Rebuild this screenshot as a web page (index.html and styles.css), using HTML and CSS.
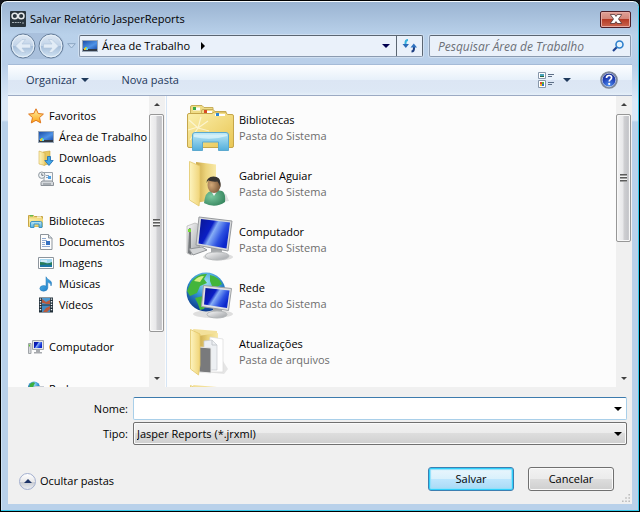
FILE: index.html
```html
<!DOCTYPE html>
<html lang="pt-BR">
<head>
<meta charset="utf-8">
<title>Salvar Relatório JasperReports</title>
<link rel="stylesheet" href="styles.css">
</head>
<body>
<svg class="defs" aria-hidden="true">
  <defs>
    <linearGradient id="g-screen" x1="0" y1="0" x2="1" y2=".5"><stop offset="0" stop-color="#0a1690"/><stop offset=".42" stop-color="#0a1ec4"/><stop offset=".55" stop-color="#86aef6"/><stop offset=".8" stop-color="#2c50e0"/><stop offset="1" stop-color="#0c28cc"/></linearGradient>
    <linearGradient id="g-desk" x1="0" y1="0" x2="1" y2="1"><stop offset="0" stop-color="#1c4fa8"/><stop offset=".6" stop-color="#4f93e6"/><stop offset="1" stop-color="#1f55b4"/></linearGradient>
    <linearGradient id="g-folder" x1="0" y1="0" x2="1" y2="1"><stop offset="0" stop-color="#fbf0ae"/><stop offset="1" stop-color="#e9c653"/></linearGradient>
    <linearGradient id="g-flap" x1="0" y1="0" x2="1" y2="0"><stop offset="0" stop-color="#fdf4bf"/><stop offset="1" stop-color="#f0d478"/></linearGradient>
    <linearGradient id="g-back" x1="0" y1="0" x2="1" y2="0"><stop offset="0" stop-color="#c9a648"/><stop offset=".5" stop-color="#ecd47c"/><stop offset="1" stop-color="#f8e9a8"/></linearGradient>
    <linearGradient id="g-tray" x1="0" y1="0" x2="0" y2="1"><stop offset="0" stop-color="#bfe9f6"/><stop offset="1" stop-color="#52aedc"/></linearGradient>
    <linearGradient id="g-metal" x1="0" y1="0" x2="1" y2="1"><stop offset="0" stop-color="#fafafa"/><stop offset="1" stop-color="#9c9fa3"/></linearGradient>
    <radialGradient id="g-globe" cx=".5" cy=".25" r=".75"><stop offset="0" stop-color="#9be0f5"/><stop offset=".5" stop-color="#2f8fd0"/><stop offset="1" stop-color="#0c3a8c"/></radialGradient>
    <linearGradient id="g-ball" x1="0" y1="0" x2="0" y2="1"><stop offset="0" stop-color="#dfe9f4"/><stop offset=".5" stop-color="#c1d3e8"/><stop offset=".52" stop-color="#a7bfda"/><stop offset="1" stop-color="#d3e5f5"/></linearGradient>
    <radialGradient id="g-help" cx=".5" cy=".85" r=".8"><stop offset="0" stop-color="#4f8ff0"/><stop offset=".6" stop-color="#1f3fb5"/><stop offset="1" stop-color="#15288c"/></radialGradient>
    <linearGradient id="g-note" x1="0" y1="0" x2="1" y2="1"><stop offset="0" stop-color="#5cc0ee"/><stop offset="1" stop-color="#1573c4"/></linearGradient>
    <linearGradient id="g-star" x1="0" y1="0" x2="0" y2="1"><stop offset="0" stop-color="#fff3a8"/><stop offset="1" stop-color="#fba414"/></linearGradient>
    <radialGradient id="g-face" cx=".3" cy=".5" r=".8"><stop offset="0" stop-color="#d2a878"/><stop offset="1" stop-color="#6d4a2e"/></radialGradient>
    <radialGradient id="g-shirt" cx=".35" cy=".4" r=".8"><stop offset="0" stop-color="#7cc9a0"/><stop offset="1" stop-color="#2c7c55"/></radialGradient>
  </defs>
  <symbol id="i-desktop" viewBox="0 0 16 16">
    <rect x=".5" y="2.500" width="15" height="11" fill="#4e5d70" stroke="#9aa8b8"/>
    <rect x="1" y="3" width="14" height="8" fill="url(#g-desk)"/>
    <path d="M1 11h14v2H1z" fill="#323a46"/>
    <path d="M2 10h2v2H2z" fill="#f2c52c"/><path d="M4 10h2v2H4z" fill="#5fd3f0"/><path d="M3 9h2v1H3z" fill="#9adf54"/>
  </symbol>
  <symbol id="i-star" viewBox="0 0 16 16">
    <path d="M8 .8l2.200 4.700 5.200.6-3.900 3.500 1.200 5.300L8 12.300l-4.700 2.600 1.200-5.300L.6 6.100l5.200-.6z" fill="url(#g-star)" stroke="#e0761b"/>
  </symbol>
  <symbol id="i-downloads" viewBox="0 0 16 16">
    <path d="M5 2l7-1v13l-7 1z" fill="#e7c860" stroke="#c9a53c" stroke-width=".6"/>
    <path d="M1 1l6 2v12.500L1 14z" fill="url(#g-flap)" stroke="#d3b04b" stroke-width=".6"/>
    <path d="M9.500 6.500h3v4h2.700L11 15.500 6.800 10.500h2.700z" fill="#42a6e8" stroke="#1a6cb5" stroke-width=".8"/>
  </symbol>
  <symbol id="i-places" viewBox="0 0 16 16">
    <path d="M6 1.500h8.500v9H6z" fill="#f5f7f9" stroke="#9aa2aa"/>
    <path d="M8 4h3v1H8zM8 6h2v1H8z" fill="#8fa3b8"/><path d="M10 5h3v3h-3z" fill="#4c9fe4"/>
    <path d="M3 11.500l1-1.500h10l1.500 1.500v3H3z" fill="#d4d8dc" stroke="#8b9198"/>
    <path d="M5 13h8" stroke="#7b8188"/>
    <circle cx="3.800" cy="4.200" r="3.200" fill="#eef2f5" stroke="#8f989f"/><path d="M3.800 2.300v2h1.700" fill="none" stroke="#5a636c" stroke-width=".9"/>
  </symbol>
  <symbol id="i-libs-sm" viewBox="0 0 16 16">
    <path d="M.5 2.500h5l1 1h8v10H.5z" fill="#eed678" stroke="#c6a546"/>
    <path d="M1 5.500h14v8H1z" fill="url(#g-folder)"/><path d="M2 2h3v1.500H2z" fill="#63b94f"/><path d="M9 4h4" stroke="#fff"/>
    <path d="M2.500 14.500V10q0-1.500 1.500-1.500h8.500q1.500 0 1.500 1.500v4.500h-3V11h-5v3.500z" fill="url(#g-tray)" stroke="#3d93c4"/>
  </symbol>
  <symbol id="i-doc" viewBox="0 0 16 16">
    <path d="M2.500.5h8l3.500 3.500v11.500H2.500z" fill="#fdfdfd" stroke="#8e959c"/><path d="M10.500.5V4H14" fill="#dce3ea" stroke="#8e959c"/>
    <path d="M4 4.500h4M4 6.500h5M4 8.500h3M4 10.500h3M4 12.500h8" stroke="#8faad2"/><path d="M8 7h4v4H8z" fill="#3672c2"/>
  </symbol>
  <symbol id="i-image" viewBox="0 0 16 16">
    <path d="M.5 2.500h15v11H.5z" fill="#fff" stroke="#8d959d"/><path d="M2 4h12v8H2z" fill="#a6d8f2"/>
    <path d="M2 7q4 0 6 1t6-1v5H2z" fill="#287c5b"/><path d="M2 10q7-1 12 0v2H2z" fill="#1c75a6"/><path d="M3 6h6" stroke="#fff"/>
  </symbol>
  <symbol id="i-music" viewBox="0 0 16 16">
    <path d="M8 .8q1.200 2.500 3.500 3.400 3.200 1.700 1.500 5.800.2-3-3.200-3.700V12q-.3 3-4.200 3.200-3.700-.2-3.800-2.700.2-2.800 3.800-3 1.500 0 2.400.6z" fill="url(#g-note)" stroke="#2577b4" stroke-width=".5"/>
  </symbol>
  <symbol id="i-video" viewBox="0 0 16 16">
    <path d="M1 .5h14v15H1z" fill="#22303a"/><path d="M4 1h8v6.500H4z" fill="#4d9ad2"/><path d="M4 8.500h8V15H4z" fill="#3f8bc6"/>
    <path d="M4 2l4 3 4-2v4H9L4 6zM5 15l3-4 4-2v3l-3 3z" fill="#b75a3e"/>
    <path d="M2.500 1.500v13M13.500 1.500v13" stroke="#eef3f5" stroke-width="1.400" stroke-dasharray="1.300 1.300"/>
  </symbol>
  <symbol id="i-computer-sm" viewBox="0 0 16 16">
    <path d="M.5 4.500h2.500v10H.5z" fill="#d7dadd" stroke="#a0a4a8"/><path d="M1 5.500h1v2H1z" fill="#66c33b"/>
    <path d="M4.500 1.500h11v9h-11z" fill="#e4e6e8" stroke="#a4a8ac"/><path d="M6 3h8v6H6z" fill="url(#g-screen)"/>
    <path d="M8 11h4v2h2v1.500H6V13h2z" fill="#a7aaae"/>
  </symbol>
  <symbol id="i-network-sm" viewBox="0 0 16 16">
    <circle cx="6" cy="6.500" r="6" fill="url(#g-globe)"/><path d="M2 3q3-3 5-1l-2 4-4 1zM7 8l3-3 2 4-3 3z" fill="#3daf3e"/>
    <path d="M6.500 5.500h9v6h-9z" fill="#1c4fe0" stroke="#c9cdd2"/><path d="M9 12h4v2H9z" fill="#a7aaae"/>
  </symbol>
  <symbol id="i-libs" viewBox="0 0 48 48">
    <path d="M4.500 14V3q0-1.500 1.500-1.500h10l2 2h9v12z" fill="#efdc86" stroke="#c8ae5b"/>
    <path d="M7 3.500h7v3H7z" fill="#fff"/><path d="M7 3h3v3H7z" fill="#39a947"/>
    <path d="M15.500 16V7q0-1.500 1.500-1.500h10l2 2h11v10z" fill="#f1dd87" stroke="#c8ae5b"/>
    <path d="M18 7h8v2.500h-8z" fill="#fff"/><path d="M18 6h3v3h-3z" fill="#d84b24"/>
    <path d="M1.500 11q0-1.500 1.500-1.500h23l2-1.500h11.500l2 2.500H46q1.500 0 1.500 1.500v30q0 1.500-1.500 1.500H3q-1.500 0-1.500-1.500z" fill="url(#g-folder)" stroke="#c5a64b"/>
    <path d="M29 10h10v2H29z" fill="#fff"/><path d="M30 9h3v3h-3z" fill="#2d87d3"/>
    <path d="M2 26l10-3M12 24l3-11M12 24l10-7M12 24l11 3M12 24l-8 12M12 24l-9-8" stroke="#fffce8" stroke-width="1.200" opacity=".7"/>
    <path d="M6.500 46.500V31q0-2.500 2.500-2.500h31q2.500 0 2.500 2.500v15.500h-10V38h-16v8.500z" fill="url(#g-tray)" stroke="#5ba9cf"/>
    <path d="M8 33q17 4 33-1v-1.500H8z" fill="#e3f7fc" opacity=".7"/>
  </symbol>
  <symbol id="i-user" viewBox="0 0 48 48">
    <path d="M18 44l25-3-3-7-15 5z" fill="#dedede"/>
    <path d="M10 2l20 2.500v35l-18 3z" fill="url(#g-back)"/>
    <path d="M3.500 1.500L14 6v31l-1 9-9.500-6z" fill="url(#g-flap)" stroke="#e2c668" stroke-width=".8"/>
    <path d="M18 43q1-11 7-12l6-1 5 1q4 2 3 11-10 7-21 1z" fill="url(#g-shirt)"/>
    <path d="M25 31l3 5 4-6z" fill="#f3f5f4"/>
    <ellipse cx="28" cy="25" rx="6.500" ry="8" fill="url(#g-face)"/>
    <path d="M20.500 23q0-6 7-6.500 7 0 7 7v4q-1.500-4-3-6-5 .5-9.500-1z" fill="#373431"/>
  </symbol>
  <symbol id="i-computer" viewBox="0 0 48 48">
    <ellipse cx="32" cy="41" rx="15" ry="3.500" fill="#dedede"/>
    <path d="M1 10l8-3 5 2v27l-9 3-4-2z" fill="url(#g-metal)" stroke="#aaa" stroke-width=".6"/><path d="M3 12l2 .5v26L2 37z" fill="#75797c"/><path d="M2 13h3v3H2z" fill="#77dc38"/>
    <path d="M3 33l13-2 5 3-14 5z" fill="#d3d5d7" stroke="#929598"/>
    <path d="M25 32h11v8H25z" fill="#a4a7aa"/><ellipse cx="31" cy="40" rx="12" ry="4" fill="url(#g-metal)" stroke="#b6b9bb"/>
    <path d="M13 1l33 4-4 30-32-6z" fill="#d7d9db" stroke="#979a9e"/><path d="M15 3l29 3.500-3.500 26L12.500 27.500z" fill="url(#g-screen)"/>
  </symbol>
  <symbol id="i-network" viewBox="0 0 48 48">
    <ellipse cx="27" cy="42" rx="20" ry="4" fill="#dedede"/>
    <circle cx="20" cy="20" r="19.500" fill="url(#g-globe)"/>
    <path d="M5 10q7-9 16-8l-3 5 3 4-7 3-3 7-7 3-3-5zM24 3q9 2 12 9l-5 3-5-1-2-5zM9 26l8-2 5 5-4 8-4 1-2-6z" fill="#43b53b"/>
    <path d="M8 9q4-5 10-5l-4 6z" fill="#d6ee84"/>
    <path d="M27 36h9v6h-9z" fill="#a5a8aa"/><ellipse cx="31" cy="42.500" rx="10" ry="3.500" fill="url(#g-metal)" stroke="#b4b7b9"/>
    <path d="M17.500 13.500l28 3-3 22-27-4z" fill="#dfe1e3" stroke="#9da0a3"/><path d="M19.500 16l24 2.500-2.500 17.500-23-3.500z" fill="url(#g-screen)"/>
  </symbol>
  <symbol id="i-folder" viewBox="0 0 48 48">
    <path d="M18 44l20 2 4-5-5-8z" fill="#e5e5e5"/>
    <path d="M7 1l24 2v12l-18 3z" fill="#f3e09a"/>
    <path d="M12 8l20-3v30l-20 4z" fill="url(#g-back)"/>
    <path d="M24 9l13 2v33H22z" fill="#fff" stroke="#dadada" stroke-width=".7"/><path d="M18 13l8-1 5 5v25H18z" fill="#edf0f3" stroke="#c5c9ce" stroke-width=".7"/><path d="M26 12v5h5" fill="none" stroke="#c5c9ce"/>
    <path d="M13 19l12 1v25l-12-1z" fill="#797a7c" stroke="#e9e9e9"/>
    <path d="M4.500 1.500L14 6v31l-1.500 10-8-6z" fill="url(#g-flap)" stroke="#e2c668" stroke-width=".8"/>
  </symbol>
  <symbol id="i-down" viewBox="0 0 8 4"><path d="M0 0h8L4 4z" fill="currentColor"/></symbol>
  <symbol id="i-up" viewBox="0 0 8 4"><path d="M4 0l4 4H0z" fill="currentColor"/></symbol>
  <symbol id="i-close" viewBox="0 0 12 10"><path d="M1 1h3.500L6 3l1.500-2H11L8 5l3 4H7.500L6 7 4.500 9H1l3-4z" fill="#fff" stroke="#594447" stroke-width="1.400" paint-order="stroke"/></symbol>
</svg>

<div class="window">
  <header class="title-bar">
    <svg class="app-icon" viewBox="0 0 16 16" aria-hidden="true">
      <rect width="16" height="16" rx="1" fill="#29343c"/>
      <g fill="none" stroke="#e6e9eb" stroke-width="1.500"><circle cx="4.800" cy="5" r="2.800"/><circle cx="11.200" cy="5" r="2.800"/></g>
      <path d="M2 11.500h9" stroke="#a7b0b6" stroke-dasharray="2 .7"/><path d="M13 11v2" stroke="#a7b0b6"/>
    </svg>
    <h1>Salvar Relatório JasperReports</h1>
    <button class="close" aria-label="Fechar"><svg><use href="#i-close"/></svg></button>
  </header>

  <nav class="nav-bar">
    <div class="travel">
      <button aria-label="Voltar"><svg viewBox="0 0 26 26"><circle cx="13" cy="13" r="12" fill="url(#g-ball)" stroke="#677f9b"/><circle cx="13" cy="13" r="10.800" fill="none" stroke="#e8f1f9"/><path d="M5.500 13l6.500-6.500h3.500L12 11h8.500v4H12l3.500 4.500H12z" fill="#e2ecf6" stroke="#b0c4da" stroke-width=".6"/></svg></button>
      <button aria-label="Avançar"><svg viewBox="0 0 26 26"><circle cx="13" cy="13" r="12" fill="url(#g-ball)" stroke="#677f9b"/><circle cx="13" cy="13" r="10.800" fill="none" stroke="#e8f1f9"/><path d="M20.500 13L14 6.500h-3.500L14 11H5.500v4H14l-3.500 4.500H14z" fill="#e2ecf6" stroke="#b0c4da" stroke-width=".6"/></svg></button>
    </div>
    <button class="recent" aria-label="Páginas recentes"><svg viewBox="0 0 9 6"><path d="M.7.700h7.600L4.500 5z" fill="#c9dcf0" stroke="#8ba5c2"/></svg></button>
    <div class="address">
      <svg class="icon" aria-hidden="true"><use href="#i-desktop"/></svg>
      <button class="crumb">Área de Trabalho</button>
      <button class="crumb-arrow" aria-label="Expandir"><svg viewBox="0 0 4 8"><path d="M0 0l4 4-4 4z"/></svg></button>
      <button class="history" aria-label="Locais anteriores"><svg class="arrow"><use href="#i-down"/></svg></button>
      <button class="refresh" aria-label="Atualizar"><svg viewBox="0 0 16 14"><path d="M6 1Q3.500 1 3.500 4v1" fill="none" stroke="#35b3df" stroke-width="2"/><path d="M.5 5h6.500L3.800 9z" fill="#2c6cb8"/><path d="M9.500 12.500q2.500 0 2.500-3.500V8" fill="none" stroke="#1c3d80" stroke-width="2"/><path d="M8.500 8.500h6.500L11.800 4.500z" fill="#2f72c0"/></svg></button>
    </div>
    <div class="search">
      <input type="search" placeholder="Pesquisar Área de Trabalho" aria-label="Pesquisar">
      <svg viewBox="0 0 12 12" aria-hidden="true"><path d="M1 11l4-4" stroke="#1f4391" stroke-width="2.200"/><circle cx="7.500" cy="4.500" r="3.500" fill="#e6f3fc" stroke="#2f80cc" stroke-width="1.600"/></svg>
    </div>
  </nav>

  <div class="toolbar">
    <button>Organizar <svg class="arrow"><use href="#i-down"/></svg></button>
    <button>Nova pasta</button>
    <button class="view" aria-label="Alterar modo de exibição">
      <svg class="icon" viewBox="0 0 16 16"><path d="M.5.500h7v6h-7zM.5 8.500h7v7h-7z" fill="#fff" stroke="#8797aa"/><path d="M2 2h4v3H2z" fill="#49a3bd"/><path d="M2 4h4v1H2z" fill="#24673f"/><path d="M2 10h2v2H2z" fill="#dd4731"/><path d="M4 10h2v2H4z" fill="#54ad3c"/><path d="M2 12h2v2H2z" fill="#eeb72c"/><path d="M4 12h2v2H4z" fill="#326fcc"/><path d="M10 2.500h6M10 4.500h4M10 10.500h6M10 12.500h4" stroke="#5d6f87"/></svg>
      <svg class="arrow"><use href="#i-down"/></svg>
    </button>
    <button class="help" aria-label="Ajuda"><svg viewBox="0 0 18 18"><circle cx="9" cy="9" r="8" fill="url(#g-help)" stroke="#7e8795" stroke-width="1.600"/><circle cx="9" cy="9" r="6.800" fill="none" stroke="#c9d3e6" stroke-width=".8"/><path d="M6.500 7q0-2.500 2.600-2.500 2.500 0 2.500 2.100 0 1.200-1.200 2-1.200.8-1.200 2" fill="none" stroke="#fff" stroke-width="1.700"/><circle cx="9.200" cy="12.900" r="1.100" fill="#fff"/></svg></button>
  </div>

  <main class="panes">
    <nav class="sidebar">
      <ul>
        <li><a href="#"><svg class="icon"><use href="#i-star"/></svg>Favoritos</a>
          <ul>
            <li><a href="#"><svg class="icon"><use href="#i-desktop"/></svg>Área de Trabalho</a></li>
            <li><a href="#"><svg class="icon"><use href="#i-downloads"/></svg>Downloads</a></li>
            <li><a href="#"><svg class="icon"><use href="#i-places"/></svg>Locais</a></li>
          </ul>
        </li>
        <li><a href="#"><svg class="icon"><use href="#i-libs-sm"/></svg>Bibliotecas</a>
          <ul>
            <li><a href="#"><svg class="icon"><use href="#i-doc"/></svg>Documentos</a></li>
            <li><a href="#"><svg class="icon"><use href="#i-image"/></svg>Imagens</a></li>
            <li><a href="#"><svg class="icon"><use href="#i-music"/></svg>Músicas</a></li>
            <li><a href="#"><svg class="icon"><use href="#i-video"/></svg>Vídeos</a></li>
          </ul>
        </li>
        <li><a href="#"><svg class="icon"><use href="#i-computer-sm"/></svg>Computador</a></li>
        <li><a href="#"><svg class="icon"><use href="#i-network-sm"/></svg>Rede</a></li>
      </ul>
    </nav>
    <div class="scrollbar">
      <button aria-label="Rolar para cima"><svg class="arrow"><use href="#i-up"/></svg></button>
      <div class="track"><div class="thumb" style="height:85%"><span class="ridges"></span></div></div>
      <button aria-label="Rolar para baixo"><svg class="arrow"><use href="#i-down"/></svg></button>
    </div>
    <ul class="files">
      <li><svg><use href="#i-libs"/></svg><p>Bibliotecas<span>Pasta do Sistema</span></p></li>
      <li><svg><use href="#i-user"/></svg><p>Gabriel Aguiar<span>Pasta do Sistema</span></p></li>
      <li><svg><use href="#i-computer"/></svg><p>Computador<span>Pasta do Sistema</span></p></li>
      <li><svg><use href="#i-network"/></svg><p>Rede<span>Pasta do Sistema</span></p></li>
      <li><svg><use href="#i-folder"/></svg><p>Atualizações<span>Pasta de arquivos</span></p></li>
      <li><svg><use href="#i-folder"/></svg></li>
    </ul>
    <div class="scrollbar">
      <button aria-label="Rolar para cima"><svg class="arrow"><use href="#i-up"/></svg></button>
      <div class="track"><div class="thumb" style="height:50%"><span class="ridges"></span></div></div>
      <button aria-label="Rolar para baixo"><svg class="arrow"><use href="#i-down"/></svg></button>
    </div>
  </main>

  <form class="bottom">
    <div class="fields">
      <label for="name">Nome:</label>
      <div class="combo name"><input id="name" type="text"><svg class="arrow"><use href="#i-down"/></svg></div>
      <label for="type">Tipo:</label>
      <div class="combo type"><select id="type"><option>Jasper Reports (*.jrxml)</option></select><svg class="arrow"><use href="#i-down"/></svg></div>
    </div>
    <div class="actions">
      <button type="button" class="hide"><span class="round"><svg class="arrow"><use href="#i-up"/></svg></span>Ocultar pastas</button>
      <button type="submit" class="btn primary">Salvar</button>
      <button type="button" class="btn">Cancelar</button>
    </div>
    <svg class="grip" viewBox="0 0 10 10" aria-hidden="true"><path d="M8 0h2v2H8zM4 4h2v2H4zM8 4h2v2H8zM0 8h2v2H0zM4 8h2v2H4zM8 8h2v2H8z" fill="#bcbcbc"/></svg>
  </form>
</div>
</body>
</html>
```
FILE: styles.css
```css
* { box-sizing: border-box; }

body {
  margin: 0;
  background: #14161c;
  color: #000;
  font: 11px/16px "Open Sans", "Noto Sans", sans-serif;
}

button, input, select {
  margin: 0;
  padding: 0;
  border: 0;
  background: none;
  color: inherit;
  font: inherit;
}

ul, p, h1 { margin: 0; padding: 0; list-style: none; }
a { color: inherit; text-decoration: none; }
svg { display: block; flex: none; }
.defs { position: absolute; width: 0; height: 0; }
.icon { width: 16px; height: 16px; }
.arrow { width: 8px; height: 4px; }

.window {
  display: flex;
  flex-direction: column;
  height: 100vh;
  padding: 0 7px 7px;
  border: 1px solid #000;
  border-radius: 7px 7px 0 0;
  box-shadow: inset 0 1px #f4f9fd, inset -1px 0 #35c9ea, inset 0 -1px #35c9ea, inset 1px 0 #cfe4f5;
  background: linear-gradient(#9ab3d1, #b9d1ea 34px, #b9cfe9 64px, #dce9f8 100px, #dce9f8 119px, #b9d1ea 121px);
}

/* Title bar */
.title-bar { display: flex; align-items: center; gap: 4px; height: 34px; padding: 2px 1px 0 2px; }
.app-icon { width: 16px; height: 16px; }
h1 { flex: 1; font-size: 11px; font-weight: 400; }
.close {
  display: grid;
  place-items: center;
  width: 31px;
  height: 17px;
  border: 1px solid #4e1f29;
  border-radius: 2px;
  box-shadow: inset 0 0 0 1px #e6aaa2;
  background: linear-gradient(#dfa096, #d38477 50%, #b53b26 50%, #ca6650);
}
.close svg { width: 12px; height: 10px; }

/* Navigation */
.nav-bar { display: flex; align-items: center; height: 22px; padding-right: 1px; }
.travel { display: flex; gap: 2px; margin-left: 2px; border-radius: 13px; background: #a9c0dc; }
.travel svg { width: 26px; height: 26px; }
.recent { margin: 0 3px; }
.recent svg { width: 9px; height: 6px; }
.address, .search {
  display: flex;
  align-items: center;
  height: 22px;
  border: 1px solid #8b9bb0;
  border-top-color: #5b6672;
  border-radius: 2px;
  box-shadow: 0 0 0 1px #cfdff1;
  background: #eaf1fa;
}
.address { flex: 344 1 344px; margin-right: 6px; padding-left: 2px; border-right-color: #5b6672; }
.address .icon { margin-right: 4px; }
.crumb, h1, .files, .sidebar a { white-space: nowrap; }
.crumb-arrow { margin-left: 11px; }
.crumb-arrow svg { width: 4px; height: 8px; }
.history { margin-left: auto; padding: 8px 6px; color: #00004f; }
.refresh { display: grid; place-items: center; align-self: stretch; width: 26px; border-left: 1px solid #5b6672; }
.refresh svg { width: 16px; height: 14px; }
.search { flex: 202 1 202px; min-width: 0; padding: 0 6px 0 8px; }
.search input { flex: 1; min-width: 0; height: 20px; outline: 0; font-size: 12px; font-style: italic; }
.search input::placeholder { color: #6c7078; opacity: 1; }
.search svg { width: 12px; height: 12px; }

/* Toolbar */
.toolbar {
  display: flex;
  align-items: center;
  height: 32px;
  margin-top: 7px;
  padding: 0 14px 0 18px;
  border-top: 1px solid #a5bbd7;
  border-bottom: 1px solid #9caac3;
  background: linear-gradient(#fdfeff, #e6f0fa 50%, #dce6f4 50%, #dde8f5 90%, #e6f0f9);
  color: #1e395b;
}
.toolbar button { display: flex; align-items: center; gap: 5px; margin-right: 32px; }
.toolbar .view { gap: 9px; margin-left: auto; margin-right: 29px; }
.toolbar .help { margin: 0; }
.help svg { width: 18px; height: 18px; }

/* Panes */
.panes { display: flex; flex: 1; min-height: 0; background: #fcfcfc; }
.sidebar { flex: none; width: 141px; padding: 9px 0 0 20px; overflow: hidden; }
.sidebar li li { padding-left: 10px; }
.sidebar > ul > li { margin-bottom: 21px; }
.sidebar a { display: flex; align-items: center; gap: 5px; height: 21px; }
.files { flex: 1; min-width: 0; margin-left: 1px; padding: 4px 0 0 19px; overflow: hidden; border-left: 1px solid #d6e5f5; }
.files li { display: flex; align-items: center; gap: 5px; height: 56px; }
.files svg { width: 48px; height: 48px; }
.files span { display: block; color: #6d6d6d; }

.scrollbar { display: flex; flex: none; flex-direction: column; width: 16px; padding-right: 1px; background: #f0f0f0; color: #404040; }
.scrollbar button { display: grid; place-items: center; height: 17px; }
.scrollbar .arrow { width: 6px; height: 3px; }
.track { flex: 1; padding-top: 1px; }
.thumb {
  display: grid;
  place-items: center;
  border: 1px solid #979797;
  border-radius: 2px;
  box-shadow: inset 0 0 0 1px #f8f8f8;
  background: linear-gradient(90deg, #f4f4f4, #e8e8ea 45%, #cfcfd2 55%, #c4c5c9 85%, #dcdcde);
}
.ridges { width: 7px; height: 8px; background: repeating-linear-gradient(#5c5c5c 0 1px, #a0a0a0 1px 2px, #f4f4f4 2px 3px); }

/* Form */
.bottom { position: relative; padding: 10px 5px 13px 0; background: #f0f0f0; }
.fields { display: grid; grid-template-columns: 120px 1fr; gap: 2px 5px; align-items: center; }
.fields label { text-align: right; }
.combo { position: relative; height: 23px; }
.combo input, .combo select {
  display: block;
  width: 100%;
  height: 100%;
  padding: 0 20px 0 3px;
  border: 1px solid #a9cfe9;
  border-radius: 2px;
  outline: 0;
  appearance: none;
}
.combo input { border-top-color: #3d7bad; background: #fff; }
.combo select { border-color: #707070; box-shadow: inset 0 0 0 1px #fafafa; background: linear-gradient(#f2f2f2, #ebebeb 50%, #dddddd 50%, #cfcfcf); }
.combo .arrow { position: absolute; right: 5px; top: 10px; pointer-events: none; }
.actions { display: flex; align-items: center; gap: 14px; height: 24px; margin-top: 22px; padding: 0 13px 0 11px; }
.hide { display: flex; align-items: center; gap: 4px; margin-right: auto; padding-top: 4px; }
.round {
  display: grid;
  place-items: center;
  width: 17px;
  height: 17px;
  border: 1px solid #a3afcf;
  border-radius: 50%;
  background: linear-gradient(#fff, #e8e8ea 50%, #c9ccd2 55%, #eceef2);
  color: #1f3567;
}
.btn {
  width: 86px;
  height: 24px;
  border: 1px solid #707070;
  border-radius: 3px;
  box-shadow: inset 0 0 0 1px #fafafa;
  background: linear-gradient(#f2f2f2, #ebebeb 50%, #dddddd 50%, #cfcfcf);
}
.primary {
  border-color: #3c7fb1;
  box-shadow: inset 0 0 0 1px #2fd0fb, inset 0 0 1px 2px #8fe0fb;
  background: linear-gradient(#eaf6fd, #d9f0fc 50%, #bee6fd 50%, #a7d9f5);
}
.grip { position: absolute; right: 2px; bottom: 2px; width: 8px; height: 8px; }
```
